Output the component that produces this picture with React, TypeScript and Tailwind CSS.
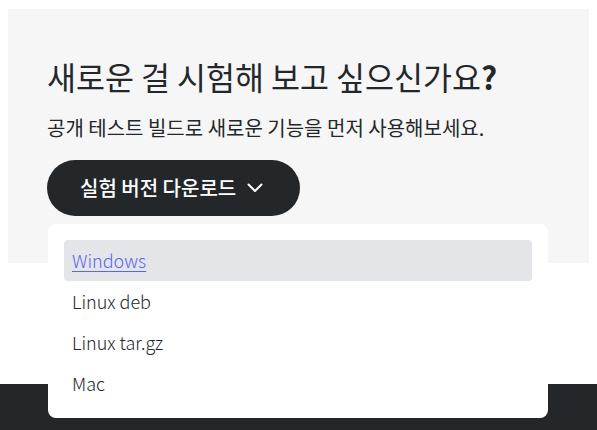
const FONT = { fontFamily: '"Noto Sans CJK KR", "Noto Sans", sans-serif' };

const ITEMS = ["Windows", "Linux deb", "Linux tar.gz", "Mac"];

export default function App() {
  return (
    <div className="min-h-[430px] bg-white pt-[9px] text-[#23272a]" style={FONT}>
      <section className="mx-[8px] bg-[#f6f6f6] pl-[39px] pt-[47px] pb-[47px]">
        <h2 className="text-[31.5px] leading-[40px] font-normal">
          새로운 걸 시험해 보고 싶으신가요<span className="font-bold">?</span>
        </h2>
        <p className="mt-[19px] text-[20px] leading-[26px] font-normal">공개 테스트 빌드로 새로운 기능을 먼저 사용해보세요.</p>
        <div className="relative mt-[19px] w-max">
          <button className="flex h-[56px] items-center gap-[11px] rounded-full bg-[#23272a] pl-[33px] pr-[37px] text-[20px] font-medium text-white">
            실험 버전 다운로드
            <svg width="16" height="10" viewBox="0 0 16 10" fill="none" stroke="white" strokeWidth="2" strokeLinecap="round" strokeLinejoin="round">
              <path d="M1.5 1.5 8 8l6.5-6.5" />
            </svg>
          </button>
          <ul className="absolute left-[1px] top-[64px] z-10 w-[500px] rounded-[8px] bg-white px-[16px] pt-[16px] pb-[14px]">
            {ITEMS.map((item, i) => (
              <li
                key={item}
                className={
                  i === 0
                    ? "flex h-[41px] items-center rounded-[4px] bg-[#e3e5e8] pl-[8px] text-[18px] font-light text-[#5865f2] underline underline-offset-[3px]"
                    : "flex h-[41px] items-center pl-[8px] text-[18px] font-light text-[#23272a]"
                }
              >
                {item}
              </li>
            ))}
          </ul>
        </div>
      </section>
      <div className="h-[121px]" />
      <footer className="h-[60px] bg-[#23272a]" />
    </div>
  );
}
